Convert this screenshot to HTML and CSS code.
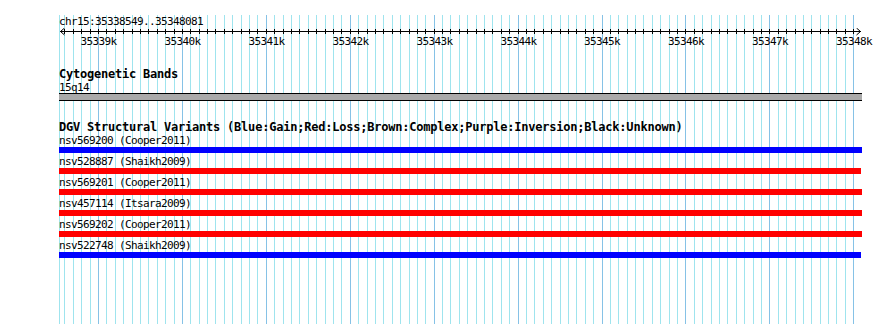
FILE: index.html
```html
<!DOCTYPE html>
<html lang="en">
<head>
    <meta charset="UTF-8">
    <title>chr15:35338549..35348081</title>
    <link rel="stylesheet" href="styles.css">
</head>
<body>

<div class="panel">
    <!-- Grid lines behind the tracks -->
    <svg class="grid" id="grid" width="890" height="324"></svg>

    <div class="content">
        <!-- Ruler -->
        <div class="ruler-title">chr15:35338549..35348081</div>
        <svg class="ruler" width="890" height="40">
            <g id="ticks"></g>
            <line class="axis" x1="60" y1="3.5" x2="861" y2="3.5"/>
            <polyline class="axis" points="64.5,0 60.5,3.5 64.5,7"/>
            <polyline class="axis" points="856.5,0 860.5,3.5 856.5,7"/>
            <text class="tick-label" x="98.5" y="17">35339k</text>
            <text class="tick-label" x="182.5" y="17">35340k</text>
            <text class="tick-label" x="266.5" y="17">35341k</text>
            <text class="tick-label" x="350.5" y="17">35342k</text>
            <text class="tick-label" x="434.5" y="17">35343k</text>
            <text class="tick-label" x="518.5" y="17">35344k</text>
            <text class="tick-label" x="602" y="17">35345k</text>
            <text class="tick-label" x="686" y="17">35346k</text>
            <text class="tick-label" x="770" y="17">35347k</text>
            <text class="tick-label" x="854" y="17">35348k</text>
        </svg>

        <!-- Cytogenetic bands -->
        <div class="track">
            <div class="track-title">Cytogenetic Bands</div>
            <div class="feature-label band-label">15q14</div>
            <div class="band"></div>
        </div>

        <!-- DGV -->
        <div class="track dgv">
            <div class="track-title">DGV Structural Variants (Blue:Gain;Red:Loss;Brown:Complex;Purple:Inversion;Black:Unknown)</div>
            <div class="feature">
                <div class="feature-label">nsv569200 (Cooper2011)</div>
                <div class="bar gain"></div>
            </div>
            <div class="feature">
                <div class="feature-label">nsv528887 (Shaikh2009)</div>
                <div class="bar loss short"></div>
            </div>
            <div class="feature">
                <div class="feature-label">nsv569201 (Cooper2011)</div>
                <div class="bar loss"></div>
            </div>
            <div class="feature">
                <div class="feature-label">nsv457114 (Itsara2009)</div>
                <div class="bar loss"></div>
            </div>
            <div class="feature">
                <div class="feature-label">nsv569202 (Cooper2011)</div>
                <div class="bar loss"></div>
            </div>
            <div class="feature">
                <div class="feature-label">nsv522748 (Shaikh2009)</div>
                <div class="bar gain short"></div>
            </div>
        </div>
    </div>
</div>

<script src="script.js"></script>
</body>
</html>
```

FILE: styles.css
```css
* {
    margin: 0;
    padding: 0;
    box-sizing: border-box;
}

body {
    width: 890px;
    height: 324px;
    overflow: hidden;
    background: #fff;
    color: #000;
    font-family: "DejaVu Sans Mono", "Liberation Mono", monospace;
}

.panel {
    position: relative;
    width: 890px;
    height: 324px;
}

.grid {
    position: absolute;
    top: 0;
    left: 0;
    z-index: 0;
}

.grid .minor {
    stroke: #9fe4ee;
    stroke-width: 1;
}

.grid .major {
    stroke: #86c2e6;
    stroke-width: 1;
}

.content {
    position: relative;
    z-index: 1;
}

/* Ruler */
.ruler-title {
    margin-top: 15px;
    padding-left: 59px;
    font-size: 11px;
    line-height: 13px;
    letter-spacing: -0.62px;
}

.ruler {
    display: block;
}

.ruler .axis,
.ruler .tick {
    stroke: #000;
    stroke-width: 1;
    fill: none;
}

.tick-label {
    font-family: "DejaVu Sans Mono", "Liberation Mono", monospace;
    font-size: 11px;
    letter-spacing: -0.62px;
    text-anchor: middle;
    fill: #000;
}

/* Tracks */
.track {
    padding-left: 59px;
}

.track-title {
    font-size: 12px;
    font-weight: bold;
    line-height: 13px;
    letter-spacing: -0.22px;
    white-space: nowrap;
}

.feature-label {
    font-size: 11px;
    line-height: 13px;
    letter-spacing: -0.62px;
    white-space: nowrap;
}

.band-label {
    height: 12px;
}

.band {
    width: 803px;
    height: 8px;
    background: #aaaaaa;
    border-top: 1px solid #000;
    border-bottom: 1px solid #000;
}

.dgv {
    margin-top: 20px;
}

.feature {
    margin-bottom: 2px;
}

.bar {
    width: 803px;
    height: 6px;
}

.bar.short {
    width: 802px;
}

.bar.gain {
    background: #0000ff;
}

.bar.loss {
    background: #ff0000;
}
```

FILE: script.js
```js
// Dibuja la rejilla y las marcas de la regla (cada 100 pb)
const svgNS = "http://www.w3.org/2000/svg";
const grid = document.getElementById("grid");
const ticks = document.getElementById("ticks");

function xpos(bp) {
    return Math.round(98 + (bp - 35339000) * 0.08392) + 0.5;
}

function addLine(parent, x, y1, y2, cls) {
    const line = document.createElementNS(svgNS, "line");
    line.setAttribute("x1", x);
    line.setAttribute("x2", x);
    line.setAttribute("y1", y1);
    line.setAttribute("y2", y2);
    line.setAttribute("class", cls);
    parent.appendChild(line);
}

addLine(grid, 59.5, 0, 324, "minor");

for (let bp = 35338600; bp <= 35348000; bp += 100) {
    const x = xpos(bp);
    const isMajor = bp % 1000 === 0;
    addLine(grid, x, 0, 324, isMajor ? "major" : "minor");
    addLine(ticks, x, 1, 6, "tick");
}
```
